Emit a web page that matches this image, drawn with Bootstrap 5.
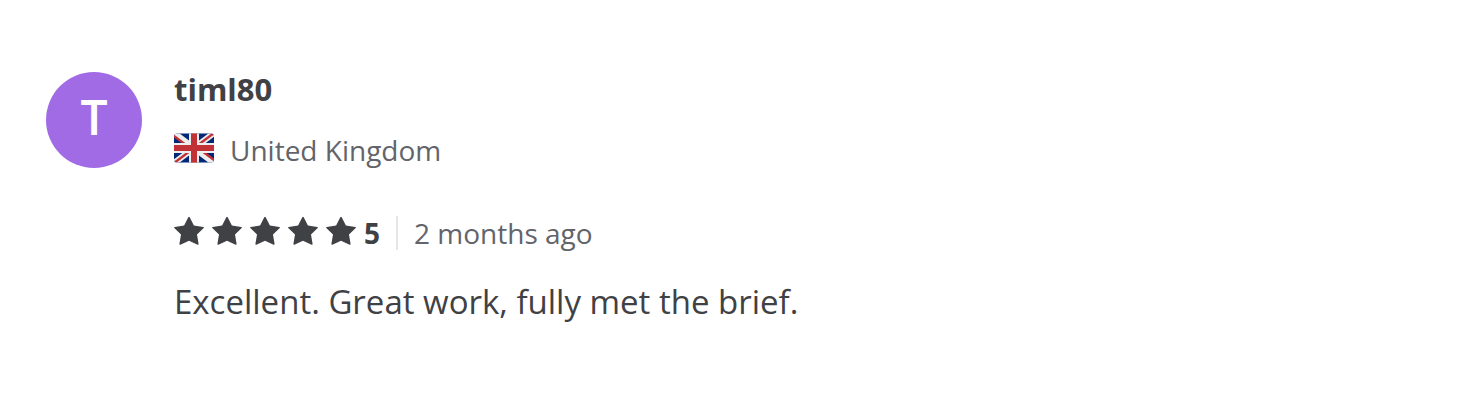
<!DOCTYPE html>
<html lang="en">
<head>
<meta charset="utf-8">
<meta name="viewport" content="width=device-width, initial-scale=1">
<title>Customer review</title>
<link href="https://cdn.jsdelivr.net/npm/bootstrap@5.3.0/dist/css/bootstrap.min.css" rel="stylesheet">
<style>
  body { font-family: "Open Sans", "Noto Sans", sans-serif; color: #404145; background: #fff; }
  .review { padding: 72px 46px; gap: 32px; }
  .avatar { width: 96px; height: 96px; background: #a06be5; font-size: 48px; line-height: 90px; }
  .reviewer { font-size: 31px; line-height: 34px; }
  .meta { font-size: 28px; line-height: 34px; color: #62646a; }
  .meta svg { margin-bottom: 4px; }
  .country { margin-top: 27px; gap: 16px; }
  .rating { margin-top: 49px; }
  .stars { gap: 8px; }
  .score { color: #404145; margin-left: 8px; }
  .age { border-left: 2px solid #e4e5e7; margin-left: 16px; padding-left: 16px; }
  .comment { font-size: 33px; line-height: 48px; margin-top: 28px; }
</style>
</head>
<body>
<svg class="d-none" aria-hidden="true">
  <symbol id="star" viewBox="0 0 30 30"><path d="M14.300 1.300q.7-1 1.400 0l4.200 8.300 9.400 1.300q1 .3.4 1.100l-6.700 6.500 1.600 9.500q0 1-1 .7L15 24.700l-8.600 4q-1 .3-1-.7L7 18.500.3 12q-.6-.8.4-1.100l9.400-1.300z" fill="#404145"/></symbol>
</svg>
<main>
  <article class="review d-flex align-items-start">
    <div class="avatar rounded-circle flex-shrink-0 text-white text-center fw-semibold">T</div>
    <div class="flex-grow-1">
      <h1 class="reviewer fw-bold mb-0">timl80</h1>
      <div class="country meta d-flex align-items-center">
        <svg width="40" height="30" viewBox="0 0 40 30" role="img" aria-label="Flag of the United Kingdom">
          <clipPath id="flag"><rect width="40" height="29" y=".5" rx="3"/></clipPath>
          <g clip-path="url(#flag)">
            <path fill="#012777" d="M0 0h40v30H0z"/>
            <path stroke="#eee" stroke-width="6" d="M0 0l40 30M40 0L0 30"/>
            <path fill="#c03235" d="M0 28.500 14 18h4L2 30H0zM40 1.500 26 12h-4L38 0h2zM0 1.500 14 12h-4L0 4.500zM40 28.500 26 18h4L40 25.500z"/>
            <path stroke="#eee" stroke-width="10" d="M20 0v30M0 15h40"/>
            <path stroke="#c03235" stroke-width="6" d="M20 0v30M0 15h40"/>
          </g>
        </svg>
        <span>United Kingdom</span>
      </div>
      <div class="rating meta d-flex align-items-center">
        <div class="stars d-flex" role="img" aria-label="5 out of 5 stars">
          <svg width="30" height="30"><use href="#star"/></svg>
          <svg width="30" height="30"><use href="#star"/></svg>
          <svg width="30" height="30"><use href="#star"/></svg>
          <svg width="30" height="30"><use href="#star"/></svg>
          <svg width="30" height="30"><use href="#star"/></svg>
        </div>
        <strong class="score">5</strong>
        <time class="age">2 months ago</time>
      </div>
      <p class="comment mb-0">Excellent. Great work, fully met the brief.</p>
    </div>
  </article>
</main>
</body>
</html>
